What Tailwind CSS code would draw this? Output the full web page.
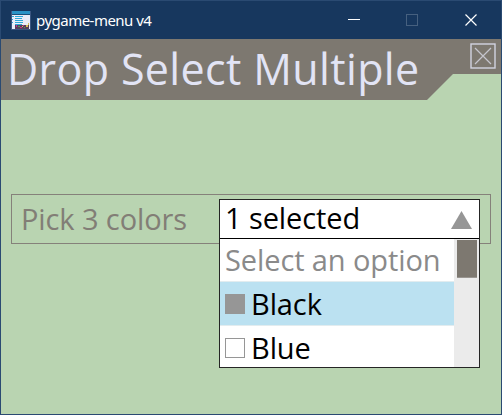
<!DOCTYPE html>
<html lang="en">
<head>
<meta charset="utf-8">
<title>pygame-menu v4</title>
<script src="https://cdn.jsdelivr.net/npm/@tailwindcss/browser@4"></script>
</head>
<body class="overflow-hidden">
<div class="w-[502px] h-[415px] border border-[#2a4a72] bg-[#b9d4b1] flex flex-col font-['Open_Sans',sans-serif]">
  <header class="h-[38px] shrink-0 bg-[#17375e] flex items-center pl-[10px] text-white">
    <svg class="w-5 h-[19px] shrink-0" viewBox="0 0 20 19" shape-rendering="crispEdges">
      <rect x="0" y="0" width="20" height="19" fill="#3b5680"/>
      <rect x="1" y="0" width="18" height="18" fill="#e9edf8"/>
      <rect x="1" y="0" width="18" height="3" fill="#2993c6"/>
      <rect x="1" y="3" width="18" height="1" fill="#1b5078"/>
      <g fill="#2caad9">
        <rect x="4" y="5" width="8" height="1"/><rect x="4" y="7" width="7" height="1"/><rect x="4" y="9" width="8" height="1"/><rect x="4" y="11" width="8" height="1"/><rect x="4" y="13" width="7" height="1"/>
        <rect x="1" y="5" width="2" height="1"/><rect x="1" y="8" width="1" height="1"/><rect x="1" y="11" width="1" height="1"/>
      </g>
      <rect x="4" y="14" width="14" height="4" fill="#57405c"/>
      <g fill="#c23290"><rect x="5" y="14" width="1" height="2"/><rect x="9" y="16" width="2" height="1"/><rect x="12" y="14" width="1" height="1"/></g>
      <g fill="#4c9a5c"><rect x="7" y="15" width="2" height="1"/><rect x="13" y="16" width="1" height="1"/></g>
      <g fill="#d8bd58"><rect x="15" y="14" width="2" height="2"/><rect x="17" y="12" width="1" height="2"/><rect x="11" y="15" width="1" height="1"/></g>
    </svg>
    <span class="ml-[5px] text-[15px] leading-5 tracking-[-0.52px] font-['Noto_Sans',sans-serif] whitespace-nowrap">pygame-menu v4</span>
    <svg class="w-[136px] h-[14px] ml-auto mr-[18px] shrink-0" viewBox="0 0 136 14" fill="none">
      <path d="M1 6.500h12" stroke="#fff"/>
      <rect x="59.500" y="1.500" width="11" height="11" stroke="#46607f"/>
      <path d="M118.500 1.500l11 11M129.500 1.500l-11 11" stroke="#fff" stroke-width="1.200"/>
    </svg>
  </header>
  <div class="h-[61px] shrink-0 flex items-start justify-between bg-[#7d7870] text-[#e2e4f5] [clip-path:polygon(0_0,100%_0,100%_35px,452px_35px,426px_100%,0_100%)]">
    <h1 class="pl-[6px] text-[43px] leading-[59px] tracking-[0.36px] whitespace-nowrap">Drop Select Multiple</h1>
    <svg class="w-[26px] h-[26px] mt-[4px] mr-[5px] shrink-0" viewBox="0 0 26 26" fill="none">
      <rect x="1" y="1" width="24" height="24" stroke="#d2d3e1" stroke-width="1.400"/>
      <path d="M5 5l16 16M21 5l-16 16" stroke="#c5c5cd" stroke-width="1.200"/>
    </svg>
  </div>
  <main class="pt-[94px] pl-[10px]">
    <div class="w-[480px] h-[50px] border border-[#85817a] flex">
      <label class="w-[207px] pl-[9px] text-[29px] leading-[48px] tracking-[-0.1px] text-[#827e76] whitespace-nowrap">Pick 3 colors</label>
      <div class="w-[261px] h-[169px] mt-[4px] shrink-0 border border-[#252525] bg-white text-black text-[29px] tracking-[-0.1px] flex flex-col">
        <div class="h-[39px] shrink-0 border-b border-black flex items-center pl-[5px] pr-[7px]">
          <span class="pb-[2px] leading-[36px] whitespace-nowrap">1 selected</span>
          <svg class="w-[21px] h-[18px] ml-auto mt-[2px]" viewBox="0 0 21 18"><path d="M10.500 0L21 18H0z" fill="#969696"/></svg>
        </div>
        <div class="flex h-[128px] overflow-hidden">
          <div class="w-[234px] flex flex-col leading-[42px] whitespace-nowrap">
            <div class="h-[42px] shrink-0 pl-[5px]  text-[#8a8a8a]">Select an option</div>
            <div class="h-[45px] shrink-0 bg-[#bbe1f1] border-y border-[#e2ecef] flex items-center pl-[5px]"><i class="size-5 bg-[#969696]"></i><span class="ml-[6px]">Black</span></div>
            <div class="h-[43px] shrink-0 flex items-center pl-[5px]"><i class="size-5 border border-[#969696]"></i><span class="ml-[6px]">Blue</span></div>
          </div>
          <div class="w-[25px] bg-[#ebebeb] pl-[3px] pt-px"><div class="w-5 h-[38px] bg-[#7d7870] border-b border-[#999590]"></div></div>
        </div>
      </div>
    </div>
  </main>
</div>
</body>
</html>
